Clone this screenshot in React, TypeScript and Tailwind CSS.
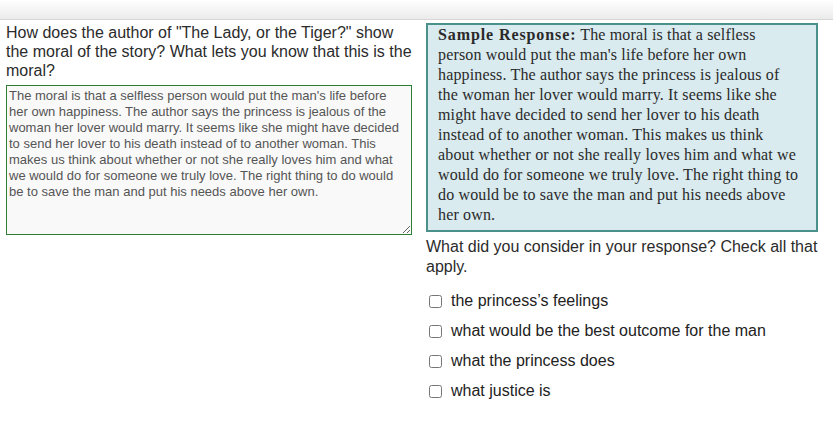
import React from "react";

const sample =
  "The moral is that a selfless person would put the man's life before her own happiness. The author says the princess is jealous of the woman her lover would marry. It seems like she might have decided to send her lover to his death instead of to another woman. This makes us think about whether or not she really loves him and what we would do for someone we truly love. The right thing to do would be to save the man and put his needs above her own.";

const sampleLines = [
  "person would put the man's life before her own",
  "happiness. The author says the princess is jealous of",
  "the woman her lover would marry. It seems like she",
  "might have decided to send her lover to his death",
  "instead of to another woman. This makes us think",
  "about whether or not she really loves him and what we",
  "would do for someone we truly love. The right thing to",
  "do would be to save the man and put his needs above",
  "her own.",
];

const options = [
  "the princess\u2019s feelings",
  "what would be the best outcome for the man",
  "what the princess does",
  "what justice is",
];

export default function App() {
  return (
    <div className="w-[833px] h-[425px] bg-white overflow-hidden font-['Liberation_Sans',Arial,sans-serif]">
      <div className="h-[20px] bg-gradient-to-b from-[#ffffff] to-[#ebebeb] border-b border-[#d6d6d6]" />
      <div className="flex">
        <div className="ml-[6px] w-[406px] pt-[3px]">
          <p className="text-[16px] leading-[19px] text-[#2b2b2b]">
            How does the author of "The Lady, or the Tiger?" show the moral of the story? What lets you know that this is the moral?
          </p>
          <textarea
            className="mt-[5px] block w-[406px] h-[150px] border border-[#2e7d32] bg-[#f9f9f9] pl-[2px] pr-[12px] pt-[2px] pb-[1px] text-[13px] leading-[16px] text-[#555] font-['Liberation_Sans',Arial,sans-serif] outline-none"
            defaultValue={sample}
          />
        </div>
        <div className="ml-[14px] w-[392px] pt-[3px]">
          <div className="border-2 border-[#4a918c] bg-[#d9ebef] pl-[10px] pr-[6px] pt-0 pb-[5px] font-['Liberation_Serif','Times_New_Roman',serif] text-[16px] leading-[20px] tracking-[0.15px] text-[#2a2a2a] whitespace-nowrap">
            <span className="block">
              <b className="tracking-[0.9px]">Sample Response:</b> The moral is that a selfless
            </span>
            {sampleLines.map((l) => (
              <span key={l} className="block">
                {l}
              </span>
            ))}
          </div>
          <p className="mt-[5px] text-[16px] leading-[20px] text-[#2b2b2b]">
            What did you consider in your response? Check all that apply.
          </p>
          <div className="mt-[14px] flex flex-col gap-[10px]">
            {options.map((o) => (
              <label key={o} className="flex items-center h-[20px] text-[16px] text-[#222]">
                <input type="checkbox" className="ml-[3px] mr-[9px] w-[13px] h-[13px] m-0" />
                <span>{o}</span>
              </label>
            ))}
          </div>
        </div>
      </div>
    </div>
  );
}
